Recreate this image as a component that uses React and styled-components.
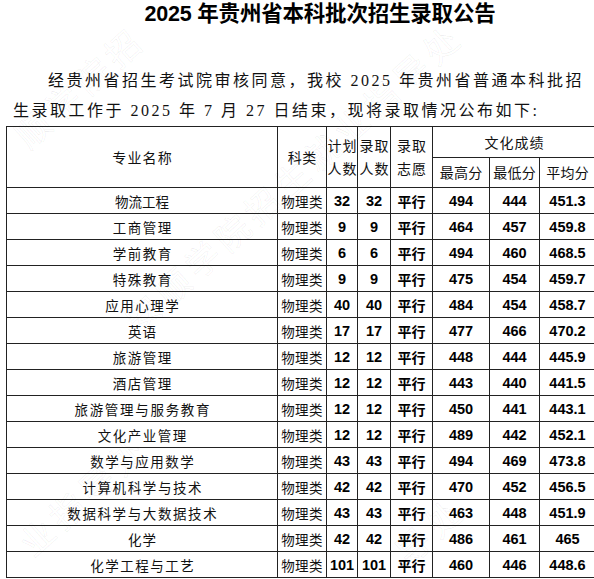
import React from "react";
import styled, { createGlobalStyle } from "styled-components";

const Global = createGlobalStyle`
  html, body { margin: 0; padding: 0; background: #fff; overflow: hidden; }
  body { color: #000; }
`;

const Page = styled.div`
  position: relative;
  width: 640px;
  font-family: "Noto Sans CJK SC", sans-serif;
`;

const Title = styled.h1`
  margin: 0;
  text-align: center;
  font-family: "Liberation Sans", "Noto Sans CJK SC", sans-serif;
  font-weight: 700;
  font-size: 21.5px;
  line-height: 28px;
  letter-spacing: -0.2px;
  color: #000;
`;

const Intro = styled.p`
  margin: 38px 0 0 0;
  padding-left: 13px;
  text-indent: 35px;
  font-family: "Liberation Serif", "Noto Sans CJK SC", serif;
  font-size: 16px;
  line-height: 30px;
  letter-spacing: 2.5px;
  white-space: nowrap;
  color: #111;
`;

const Table = styled.div`
  display: grid;
  grid-template-columns: 270px 48px 30px 32px 41px 56px 49px 55px;
  grid-template-rows: 30px 29px repeat(15, 25px);
  gap: 1px;
  background: #222;
  border: 1px solid #222;
  margin-left: 6px;
  width: max-content;
`;

const Cell = styled.div`
  background: #fff;
  display: flex;
  align-items: center;
  justify-content: center;
  white-space: nowrap;
  overflow: visible;
  grid-column: ${(p) => p.$col || "auto"};
  grid-row: ${(p) => p.$row || "auto"};
`;

const HeadText = styled.span`
  font-family: "Noto Sans CJK SC", sans-serif;
  font-size: 14px;
  line-height: 23px;
  letter-spacing: ${(p) => p.$ls ?? 1}px;
  margin-right: ${(p) => -(p.$ls ?? 1)}px;
  text-align: center;
  color: #111;
`;

const MajorText = styled.span`
  font-family: "Noto Sans CJK SC", sans-serif;
  font-size: 13.5px;
  letter-spacing: ${(p) => p.$ls}px;
  margin-right: ${(p) => -p.$ls}px;
  color: #111;
`;

const TypeText = styled.span`
  font-family: "Noto Sans CJK SC", sans-serif;
  font-size: 13.5px;
  letter-spacing: 0.4px;
  color: #111;
`;

const Num = styled.span`
  font-family: "Liberation Sans", sans-serif;
  font-weight: 700;
  font-size: 14.5px;
  color: #000;
`;

const Mode = styled.span`
  font-family: "Noto Sans CJK SC", sans-serif;
  font-weight: 700;
  font-size: 14px;
  color: #000;
`;

const Watermark = styled.span`
  position: absolute;
  left: ${(p) => p.$x}px;
  top: ${(p) => p.$y - 20}px;
  line-height: 40px;
  font-family: "Noto Sans CJK SC", sans-serif;
  font-size: 34px;
  letter-spacing: 6px;
  white-space: nowrap;
  color: transparent;
  -webkit-text-stroke: 0.6px rgba(0, 0, 0, 0.08);
  transform: rotate(-42deg);
  transform-origin: 0 50%;
  pointer-events: none;
`;

const rows = [
  ["物流工程", 0, 32, 32, 494, 444, "451.3"],
  ["工商管理", 1.5, 9, 9, 464, 457, "459.8"],
  ["学前教育", 1.5, 6, 6, 494, 460, "468.5"],
  ["特殊教育", 1.5, 9, 9, 475, 454, "459.7"],
  ["应用心理学", 1.5, 40, 40, 484, 454, "458.7"],
  ["英语", 1, 17, 17, 477, 466, "470.2"],
  ["旅游管理", 1.5, 12, 12, 448, 444, "445.9"],
  ["酒店管理", 1.5, 12, 12, 443, 440, "441.5"],
  ["旅游管理与服务教育", 1.7, 12, 12, 450, 441, "443.1"],
  ["文化产业管理", 1.5, 12, 12, 489, 442, "452.1"],
  ["数学与应用数学", 1.5, 43, 43, 494, 469, "473.8"],
  ["计算机科学与技术", 1.6, 42, 42, 470, 452, "456.5"],
  ["数据科学与大数据技术", 1.6, 43, 43, 463, 448, "451.9"],
  ["化学", 1, 42, 42, 486, 461, "465"],
  ["化学工程与工艺", 1.5, 101, 101, 460, 446, "448.6"],
];

const marks = [
  { x: 20, y: 140, text: "顺学院招" },
  { x: 130, y: 324, text: "安顺学院招生就业指导处" },
  { x: 24, y: 548, text: "业指导处" },
  { x: 400, y: 556, text: "导处" },
];

export default function App() {
  return (
    <>
      <Global />
      <Page>
        <Title>2025 年贵州省本科批次招生录取公告</Title>
        <Intro>
          经贵州省招生考试院审核同意，我校 2025 年贵州省普通本科批招
          <br />
          生录取工作于 2025 年 7 月 27 日结束，现将录取情况公布如下:
        </Intro>
        <Table>
          <Cell $col="1" $row="1 / span 2">
            <HeadText $ls={1.2}>专业名称</HeadText>
          </Cell>
          <Cell $col="2" $row="1 / span 2">
            <HeadText $ls={0.5}>科类</HeadText>
          </Cell>
          <Cell $col="3" $row="1 / span 2">
            <HeadText $ls={0.8}>计划<br />人数</HeadText>
          </Cell>
          <Cell $col="4" $row="1 / span 2">
            <HeadText $ls={0.8}>录取<br />人数</HeadText>
          </Cell>
          <Cell $col="5" $row="1 / span 2">
            <HeadText $ls={1}>录取<br />志愿</HeadText>
          </Cell>
          <Cell $col="6 / span 3" $row="1">
            <HeadText $ls={1}>文化成绩</HeadText>
          </Cell>
          <Cell $col="6" $row="2">
            <HeadText $ls={0.3}>最高分</HeadText>
          </Cell>
          <Cell $col="7" $row="2">
            <HeadText $ls={0.3}>最低分</HeadText>
          </Cell>
          <Cell $col="8" $row="2">
            <HeadText $ls={0.3}>平均分</HeadText>
          </Cell>
          {rows.map(([name, ls, plan, adm, hi, lo, avg]) => (
            <React.Fragment key={name}>
              <Cell>
                <MajorText $ls={ls}>{name}</MajorText>
              </Cell>
              <Cell>
                <TypeText>物理类</TypeText>
              </Cell>
              <Cell>
                <Num>{plan}</Num>
              </Cell>
              <Cell>
                <Num>{adm}</Num>
              </Cell>
              <Cell>
                <Mode>平行</Mode>
              </Cell>
              <Cell>
                <Num>{hi}</Num>
              </Cell>
              <Cell>
                <Num>{lo}</Num>
              </Cell>
              <Cell>
                <Num>{avg}</Num>
              </Cell>
            </React.Fragment>
          ))}
        </Table>
        {marks.map((m, i) => (
          <Watermark key={i} $x={m.x} $y={m.y}>
            {m.text}
          </Watermark>
        ))}
      </Page>
    </>
  );
}
